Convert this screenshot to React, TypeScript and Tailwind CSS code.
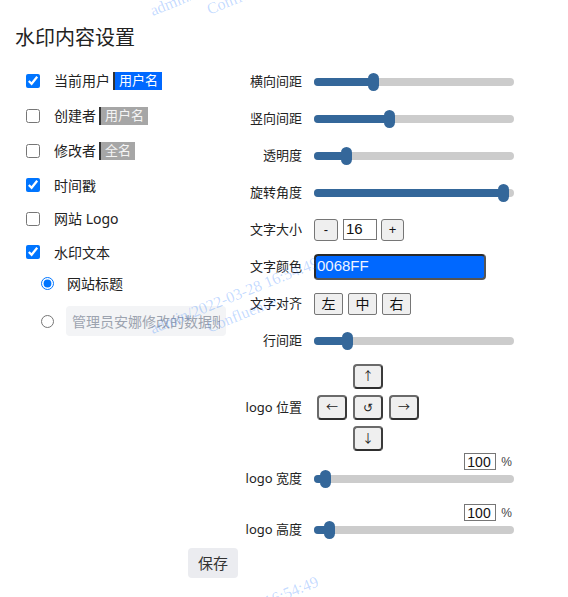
import React from "react";

function Slider({ pos }: { pos: number }) {
  return (
    <div className="relative flex h-[18px] w-[200px] items-center">
      <div className="h-[8px] w-full rounded-full bg-[#cccccc]" />
      <div className="absolute left-0 top-[5px] h-[8px] rounded-full bg-[#34679a]" style={{ width: pos }} />
      <div className="absolute top-0 h-[18px] w-[11px] rounded-full bg-[#34679a]" style={{ left: pos - 5 }} />
    </div>
  );
}

function Row({ label, children }: { label: string; children: React.ReactNode }) {
  return (
    <div className="flex h-[37px] items-center">
      <div className="mr-[12px] w-[62px] whitespace-nowrap text-right text-[13px] text-[#222]">{label}</div>
      {children}
    </div>
  );
}

function Check({ checked, label, badge, badgeBlue }: { checked: boolean; label: string; badge?: string; badgeBlue?: boolean }) {
  return (
    <div className="flex h-full items-center">
      <input type="checkbox" defaultChecked={checked} className="h-[14px] w-[14px]" />
      <span className="ml-[14px] text-[14px] text-[#222]">{label}</span>
      {badge && (
        <span
          className={
            badgeBlue
              ? "ml-[3px] flex h-[18px] items-center border-l-2 border-[#333] bg-[#0068ff] px-[4px] text-[13px] text-white"
              : "ml-[3px] flex h-[18px] items-center border-l-2 border-[#333] bg-[#a6a6a6] px-[4px] text-[13px] text-[#f4f4f4]"
          }
        >
          {badge}
        </span>
      )}
    </div>
  );
}

function Arrow({ ch }: { ch: string }) {
  return (
    <button className="flex h-[25px] w-[30px] items-center justify-center rounded-[4px] border-2 border-[#6a6a6a] border-b-[#2e2e2e] border-r-[#3a3a3a] bg-[#efefef] text-[12px] text-[#222]">
      {ch}
    </button>
  );
}

function Watermark({ top }: { top: number }) {
  return (
    <div
      className="absolute left-[128px] w-[220px] rotate-[-22deg] text-center font-['Liberation_Serif',serif] text-[16px] leading-[20px] text-[rgba(0,104,255,0.24)]"
      style={{ top }}
    >
      <div className="whitespace-nowrap">admin/2022-03-28 16:54:49</div>
      <div className="whitespace-nowrap">Confluence</div>
    </div>
  );
}

export default function App() {
  return (
    <div className="relative h-[597px] w-[568px] overflow-hidden bg-white font-['Noto_Sans','Noto_Sans_CJK_SC',sans-serif] text-[#222]">
      <div className="pl-[15px] pt-[24px]">
        <h1 className="text-[20px] leading-[28px] text-[#222]">水印内容设置</h1>
        <div className="mt-[11px] flex">
          {/* left column */}
          <div className="ml-[11px] flex w-[214px] flex-col">
            <div className="h-[35px]">
              <Check checked label="当前用户" badge="用户名" badgeBlue />
            </div>
            <div className="h-[35px]">
              <Check checked={false} label="创建者" badge="用户名" />
            </div>
            <div className="h-[35px]">
              <Check checked={false} label="修改者" badge="全名" />
            </div>
            <div className="h-[34px]">
              <Check checked label="时间戳" />
            </div>
            <div className="h-[33px]">
              <Check checked={false} label="网站 Logo" />
            </div>
            <div className="h-[34px]">
              <Check checked label="水印文本" />
            </div>
            <div className="flex h-[28px] items-center pl-[15px]">
              <input type="radio" name="wm" defaultChecked className="h-[13px] w-[13px]" />
              <span className="ml-[13px] text-[14px] text-[#222]">网站标题</span>
            </div>
            <div className="mt-[9px] flex h-[30px] items-center pl-[15px]">
              <input type="radio" name="wm" className="h-[13px] w-[13px]" />
              <input
                type="text"
                defaultValue="管理员安娜修改的数据账号名称"
                className="ml-[12px] h-[30px] w-[160px] rounded-[4px] bg-[#f3f4f6] px-[6px] text-[14px] text-[#9ca3af] outline-none"
              />
            </div>
          </div>

          {/* right column */}
          <div className="flex w-[274px] flex-col">
            <Row label="横向间距">
              <Slider pos={59} />
            </Row>
            <Row label="竖向间距">
              <Slider pos={75} />
            </Row>
            <Row label="透明度">
              <Slider pos={32} />
            </Row>
            <Row label="旋转角度">
              <Slider pos={189} />
            </Row>
            <Row label="文字大小">
              <div className="flex items-center">
                <button className="flex h-[22px] w-[24px] items-center justify-center rounded-[3px] border border-[#767676] bg-[#efefef] font-['Liberation_Sans',sans-serif] text-[13px] text-[#111]">
                  -
                </button>
                <input
                  type="text"
                  defaultValue="16"
                  className="ml-[5px] h-[21px] w-[34px] border border-[#767676] px-[2px] font-['Liberation_Sans',sans-serif] text-[15px] text-[#111] outline-none"
                />
                <button className="ml-[4px] flex h-[22px] w-[23px] items-center justify-center rounded-[3px] border border-[#767676] bg-[#efefef] font-['Liberation_Sans',sans-serif] text-[13px] text-[#111]">
                  +
                </button>
              </div>
            </Row>
            <Row label="文字颜色">
              <div className="flex h-[26px] w-[172px] items-center rounded-[4px] border-2 border-[#2a2a2a] border-b-[#555] border-r-[#555] bg-[#0068ff] pl-[1px] font-['Liberation_Sans',sans-serif] text-[15px] text-[#eef3ff]">
                0068FF
              </div>
            </Row>
            <Row label="文字对齐">
              <div className="flex items-center gap-[5px]">
                {["左", "中", "右"].map((c) => (
                  <button
                    key={c}
                    className="flex h-[22px] w-[29px] items-center justify-center rounded-[2px] border border-[#767676] bg-[#efefef] text-[14px] text-[#111]"
                  >
                    {c}
                  </button>
                ))}
              </div>
            </Row>
            <Row label="行间距">
              <Slider pos={33} />
            </Row>

            {/* logo position */}
            <div className="flex items-center pt-[5px]">
              <div className="mr-[12px] w-[62px] whitespace-nowrap text-right text-[13px] text-[#222]">logo 位置</div>
              <div className="ml-[3px] grid grid-cols-[30px_30px_30px] gap-x-[6px] gap-y-[6px]">
                <div />
                <Arrow ch="↑" />
                <div />
                <Arrow ch="←" />
                <Arrow ch="↺" />
                <Arrow ch="→" />
                <div />
                <Arrow ch="↓" />
                <div />
              </div>
            </div>

            {/* logo width */}
            <div className="mt-[2px] flex items-end">
              <div className="mr-[12px] flex h-[18px] w-[62px] items-center justify-end whitespace-nowrap text-[13px] text-[#222]">
                logo 宽度
              </div>
              <div className="flex flex-col">
                <div className="flex h-[17px] items-center justify-end">
                  <input
                    type="text"
                    defaultValue="100"
                    className="h-[17px] w-[32px] border border-[#767676] px-[2px] font-['Liberation_Sans',sans-serif] text-[14px] leading-[15px] text-[#111] outline-none"
                  />
                  <span className="ml-[5px] mr-[2px] font-['Liberation_Sans',sans-serif] text-[12px] text-[#444]">%</span>
                </div>
                <Slider pos={11} />
              </div>
            </div>

            {/* logo height */}
            <div className="mt-[16px] flex items-end">
              <div className="mr-[12px] flex h-[18px] w-[62px] items-center justify-end whitespace-nowrap text-[13px] text-[#222]">
                logo 高度
              </div>
              <div className="flex flex-col">
                <div className="flex h-[17px] items-center justify-end">
                  <input
                    type="text"
                    defaultValue="100"
                    className="h-[17px] w-[32px] border border-[#767676] px-[2px] font-['Liberation_Sans',sans-serif] text-[14px] leading-[15px] text-[#111] outline-none"
                  />
                  <span className="ml-[5px] mr-[2px] font-['Liberation_Sans',sans-serif] text-[12px] text-[#444]">%</span>
                </div>
                <Slider pos={15} />
              </div>
            </div>
          </div>
        </div>
        <button className="ml-[173px] mt-[9px] flex h-[30px] w-[50px] items-center justify-center rounded-[4px] bg-[#ebecf0] text-[15px] text-[#333]">
          保存
        </button>
      </div>

      <div className="pointer-events-none absolute inset-0">
        <Watermark top={-33} />
        <Watermark top={285} />
        <Watermark top={604} />
      </div>
    </div>
  );
}
